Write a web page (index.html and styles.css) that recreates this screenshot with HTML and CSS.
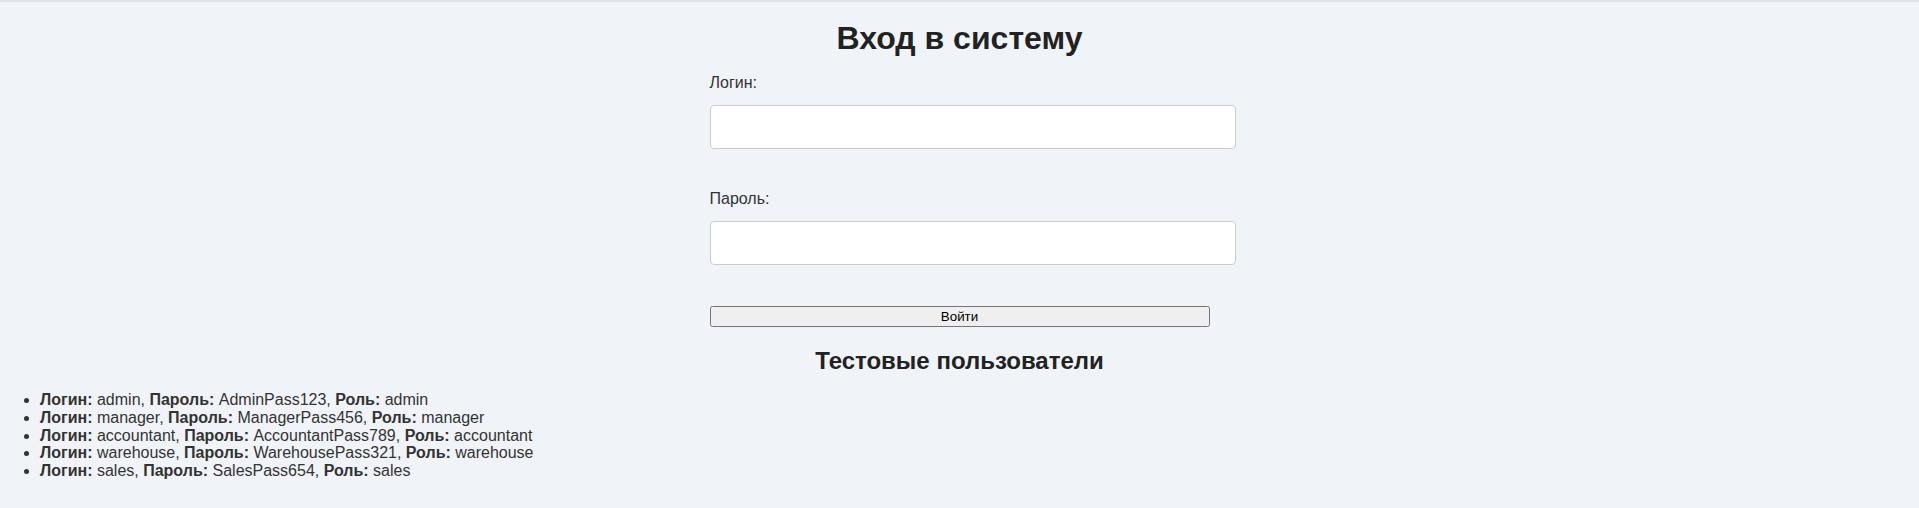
FILE: index.html
```html
<!DOCTYPE html>
<html lang="ru">
<head>
<meta charset="utf-8">
<title>Вход в систему</title>
<link rel="stylesheet" href="styles.css">
</head>
<body>
<div class="login">
  <h1 class="title">Вход в систему</h1>
  <form class="form">
    <div class="field">
      <label class="label" for="login">Логин:</label>
      <input class="input" id="login" type="text">
    </div>
    <div class="field">
      <label class="label" for="password">Пароль:</label>
      <input class="input" id="password" type="password">
    </div>
    <button class="submit" type="button">Войти</button>
  </form>
  <h2 class="subtitle">Тестовые пользователи</h2>
</div>
<ul class="users">
  <li><b>Логин:</b> admin, <b>Пароль:</b> AdminPass123, <b>Роль:</b> admin</li>
  <li><b>Логин:</b> manager, <b>Пароль:</b> ManagerPass456, <b>Роль:</b> manager</li>
  <li><b>Логин:</b> accountant, <b>Пароль:</b> AccountantPass789, <b>Роль:</b> accountant</li>
  <li><b>Логин:</b> warehouse, <b>Пароль:</b> WarehousePass321, <b>Роль:</b> warehouse</li>
  <li><b>Логин:</b> sales, <b>Пароль:</b> SalesPass654, <b>Роль:</b> sales</li>
</ul>
</body>
</html>
```

FILE: styles.css
```css
body {
  margin: 0;
  background: #f0f4f8;
  font-family: "Liberation Sans", Arial, sans-serif;
  color: #333;
  border-top: 2px solid #e1e4e7;
}
.login {
  max-width: 500px;
  margin: 0 auto;
}
.title {
  text-align: center;
  font-size: 32px;
  color: #222;
  margin: 18px 0 17px;
}
.field {
  margin-bottom: 41px;
}
.label {
  display: block;
  font-size: 16px;
  margin-bottom: 13px;
}
.input {
  display: block;
  width: 100%;
  padding: 12px;
  border: 1px solid #ccc;
  border-radius: 4px;
  font-size: 16px;
  background: #fff;
}
.submit {
  display: block;
  width: 100%;
}
.subtitle {
  text-align: center;
  font-size: 24px;
  color: #222;
  margin: 20px 0 16px;
}
.users {
  margin: 0;
  padding-left: 40px;
  font-size: 16px;
  line-height: 17.75px;
}
```
